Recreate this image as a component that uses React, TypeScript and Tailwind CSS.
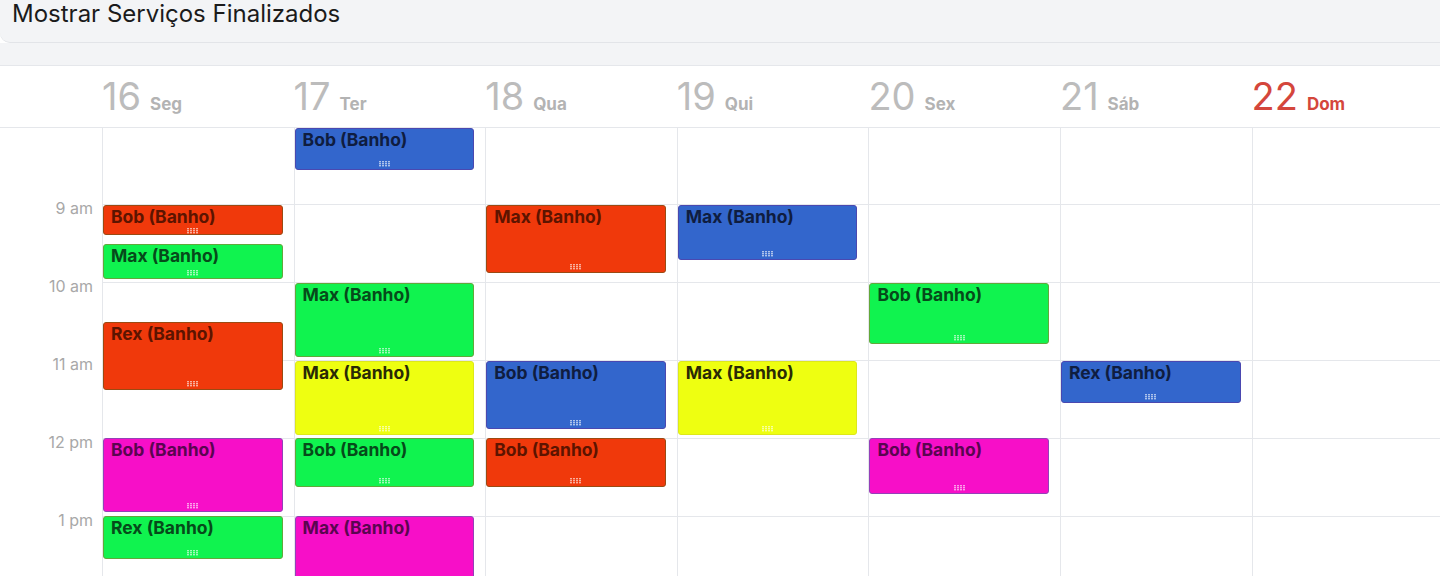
import React from "react";

type Ev = { col: number; top: number; h: number; label: string; c: "red" | "green" | "blue" | "yellow" | "magenta" };

const colorCls: Record<Ev["c"], string> = {
  red: "bg-[#f0390b] border-[#9b4a12] text-[#5c1400]",
  green: "bg-[#10f34f] border-[#62a83a] text-[#064a1a]",
  blue: "bg-[#3366cc] border-[#4a48b0] text-[#0f1d40]",
  yellow: "bg-[#eeff11] border-[#dde81a] text-[#2a2a05]",
  magenta: "bg-[#f70fc8] border-[#9440b8] text-[#5a0550]",
};

const events: Ev[] = [
  { col: 0, top: 77, h: 30, label: "Bob (Banho)", c: "red" },
  { col: 0, top: 116, h: 35, label: "Max (Banho)", c: "green" },
  { col: 0, top: 194, h: 68, label: "Rex (Banho)", c: "red" },
  { col: 0, top: 310, h: 74, label: "Bob (Banho)", c: "magenta" },
  { col: 0, top: 388, h: 43, label: "Rex (Banho)", c: "green" },
  { col: 1, top: 0, h: 42, label: "Bob (Banho)", c: "blue" },
  { col: 1, top: 155, h: 74, label: "Max (Banho)", c: "green" },
  { col: 1, top: 233, h: 74, label: "Max (Banho)", c: "yellow" },
  { col: 1, top: 310, h: 49, label: "Bob (Banho)", c: "green" },
  { col: 1, top: 388, h: 80, label: "Max (Banho)", c: "magenta" },
  { col: 2, top: 77, h: 68, label: "Max (Banho)", c: "red" },
  { col: 2, top: 233, h: 68, label: "Bob (Banho)", c: "blue" },
  { col: 2, top: 310, h: 49, label: "Bob (Banho)", c: "red" },
  { col: 3, top: 77, h: 55, label: "Max (Banho)", c: "blue" },
  { col: 3, top: 233, h: 74, label: "Max (Banho)", c: "yellow" },
  { col: 4, top: 155, h: 61, label: "Bob (Banho)", c: "green" },
  { col: 4, top: 310, h: 56, label: "Bob (Banho)", c: "magenta" },
  { col: 5, top: 233, h: 42, label: "Rex (Banho)", c: "blue" },
];

const days = [
  { n: "16", d: "Seg" },
  { n: "17", d: "Ter" },
  { n: "18", d: "Qua" },
  { n: "19", d: "Qui" },
  { n: "20", d: "Sex" },
  { n: "21", d: "Sáb" },
  { n: "22", d: "Dom", today: true },
];

const hours = ["", "9 am", "10 am", "11 am", "12 pm", "1 pm"];

function Grip() {
  return (
    <svg width="11" height="6" viewBox="0 0 11 6" className="opacity-60">
      {[0, 1, 2, 3].map((x) =>
        [0, 1, 2].map((y) => (
          <rect key={`${x}-${y}`} x={x * 3} y={y * 2} width="2" height="1.4" fill="#ffffff" />
        ))
      )}
    </svg>
  );
}

function Event({ e }: { e: Ev }) {
  return (
    <div
      className={`absolute left-0 right-[11px] rounded-[3px] border flex flex-col overflow-hidden ${colorCls[e.c]}`}
      style={{ top: e.top, height: e.h }}
    >
      <div className="px-[7px] text-[17.5px] font-bold leading-[22px] whitespace-nowrap">{e.label}</div>
      <div className="mt-auto flex justify-center pb-[2px]">
        <Grip />
      </div>
    </div>
  );
}

export default function App() {
  return (
    <div className="w-[1440px] h-[576px] overflow-hidden bg-white" style={{ fontFamily: "Inter, 'Noto Sans', sans-serif" }}>
      <div className="h-[43px] bg-[#f3f4f6] border-b border-[#e2e4e8] rounded-bl-[10px] px-[12px]">
        <div className="text-[24px] leading-[27px] text-[#1b1b1b]">Mostrar Serviços Finalizados</div>
      </div>
      <div className="h-[23px] bg-[#f3f4f6] border-b border-[#e5e7eb]" />
      <div className="grid grid-cols-[102px_repeat(7,191.6px)] h-[62px] border-b border-[#e5e7eb]">
        <div />
        {days.map((d) => (
          <div key={d.n} className="flex items-baseline gap-[9px] pt-[8px]">
            <span className={`text-[38px] leading-[44px] ${d.today ? "text-[#d4463c]" : "text-[#bcbcbc]"}`}>{d.n}</span>
            <span className={`text-[17px] font-bold ${d.today ? "text-[#d4463c]" : "text-[#b3b3b3]"}`}>{d.d}</span>
          </div>
        ))}
      </div>
      <div className="grid grid-cols-[102px_repeat(7,191.6px)]">
        <div className="flex flex-col">
          {hours.map((h, i) => (
            <div key={i} className={`relative shrink-0 ${i === 0 ? "h-[77px]" : "h-[78px]"}`}>
              {h && (
                <span className="absolute right-[9px] -top-[7px] text-[16px] leading-[20px] text-[#a8a8a8]">{h}</span>
              )}
            </div>
          ))}
        </div>
        {days.map((d, ci) => (
          <div key={d.n} className="relative border-l border-[#e5e7eb] flex flex-col">
            {hours.map((_, i) => (
              <div key={i} className={`shrink-0 border-b border-[#e5e7eb] ${i === 0 ? "h-[77px]" : "h-[78px]"}`} />
            ))}
            {events.filter((e) => e.col === ci).map((e, k) => (
              <Event key={k} e={e} />
            ))}
          </div>
        ))}
      </div>
    </div>
  );
}
